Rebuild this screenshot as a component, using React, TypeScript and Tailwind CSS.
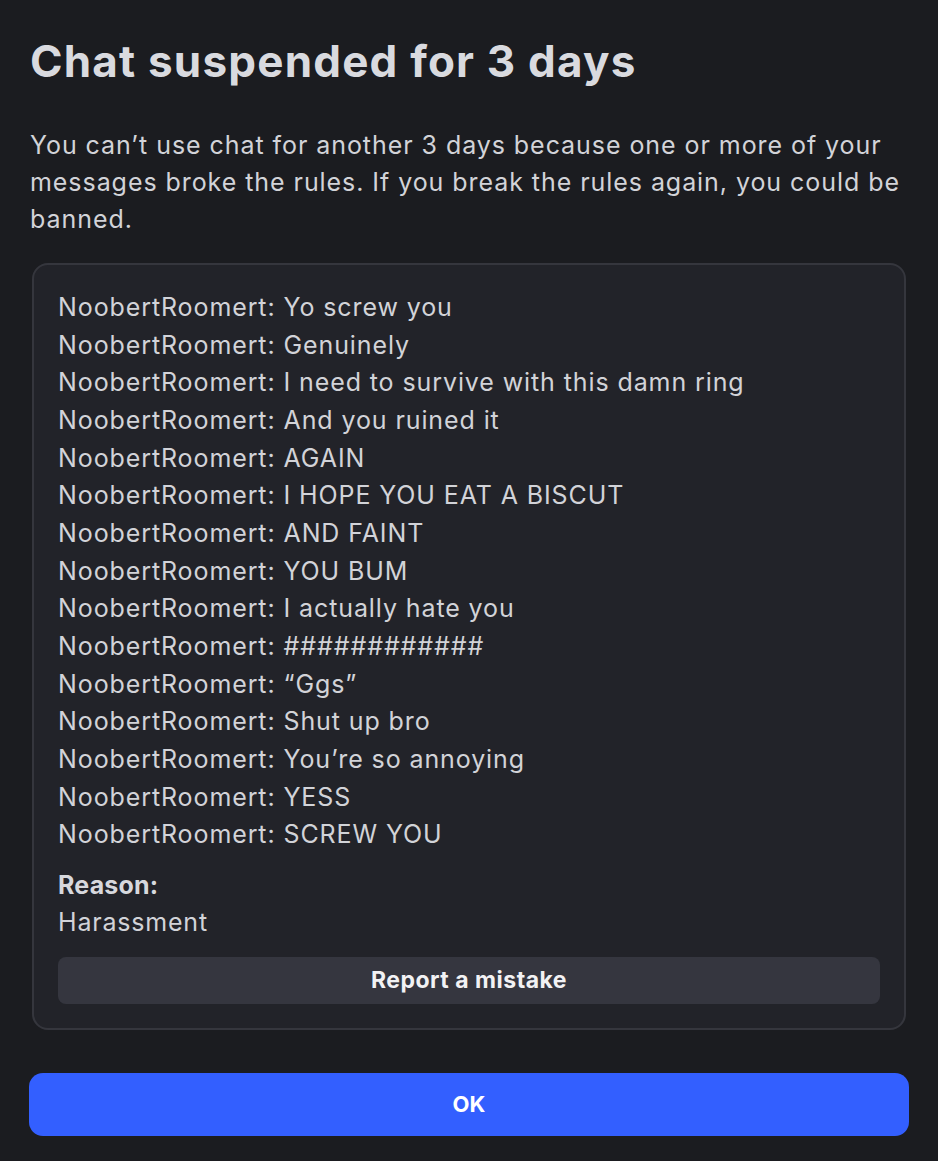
import React from "react";

const lines = [
  "Yo screw you",
  "Genuinely",
  "I need to survive with this damn ring",
  "And you ruined it",
  "AGAIN",
  "I HOPE YOU EAT A BISCUT",
  "AND FAINT",
  "YOU BUM",
  "I actually hate you",
  "############",
  "\u201CGgs\u201D",
  "Shut up bro",
  "You\u2019re so annoying",
  "YESS",
  "SCREW YOU",
];

export default function App() {
  return (
    <div
      className="min-h-[1161px] w-full bg-[#1b1c20] px-[29px] pt-[31px] text-[#d7d8dd]"
      style={{ fontFamily: 'Inter, "Noto Sans", sans-serif' }}
    >
      <h1 className="text-[44px] font-bold leading-[60px] tracking-[1.2px] text-[#d9dadf] pl-[1px]">
        Chat suspended for 3 days
      </h1>
      <p className="mt-[36px] pl-[1px] text-[25px] leading-[37px] tracking-[0.94px] text-[#d2d3d8]">
        You can’t use chat for another 3 days because one or more of your messages broke the rules. If you break the rules again, you could be banned.
      </p>
      <div className="mx-[3px] mt-[25px] rounded-[16px] border-2 border-[#35363d] bg-[#222329] px-[24px] pt-[24px] pb-[24px]">
        <div className="text-[25px] leading-[37.65px] tracking-[0.9px] text-[#d2d3d8]">
          {lines.map((l, i) => (
            <div key={i}>NoobertRoomert: {l}</div>
          ))}
        </div>
        <div className="mt-[13px] text-[25px] leading-[37px] font-bold tracking-[0.2px] text-[#d7d8dd]">Reason:</div>
        <div className="text-[25px] leading-[37px] tracking-[0.8px] text-[#d2d3d8]">Harassment</div>
        <button className="mt-[16px] flex h-[47px] w-full items-center justify-center rounded-[8px] bg-[#35363f] text-[23px] font-bold tracking-[0.5px] text-[#f2f2f4]">
          Report a mistake
        </button>
      </div>
      <button className="mt-[43px] flex h-[63px] w-full items-center justify-center rounded-[14px] bg-[#335fff] text-[22px] font-bold text-white">
        OK
      </button>
    </div>
  );
}
